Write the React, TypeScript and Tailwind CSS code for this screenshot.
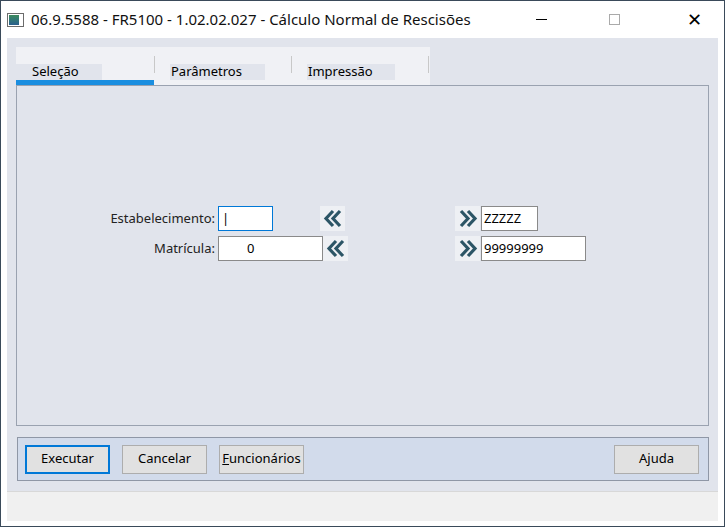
import React from "react";

const font = { fontFamily: '"Segoe UI", "Noto Sans", "Liberation Sans", sans-serif' };

function Chevrons({ dir }: { dir: "left" | "right" }) {
  const d = dir === "left" ? "M11 3 L4 10.5 L11 18 M18 3 L11 10.5 L18 18" : "M4 3 L11 10.5 L4 18 M11 3 L18 10.5 L11 18";
  return (
    <div className="flex h-[25px] w-[25px] items-center justify-center bg-[#eef0f4]">
      <svg width="22" height="21" viewBox="0 0 22 21">
        <path d={d} fill="none" stroke="#2c5566" strokeWidth="3.2" />
      </svg>
    </div>
  );
}

function Btn({ label, focus, u }: { label: string; focus?: boolean; u?: boolean }) {
  return (
    <button
      className={`h-[29px] w-[85px] bg-[#e1e1e1] text-[13px] text-black ${focus ? "border-2 border-[#0078d7]" : "border border-[#adadad]"}`}
    >
      {u ? (
        <>
          <span className="underline">F</span>uncionários
        </>
      ) : (
        label
      )}
    </button>
  );
}

export default function App() {
  return (
    <div className="h-[527px] w-[725px] overflow-hidden bg-white text-black" style={font}>
      <div className="flex h-[527px] flex-col border border-[#3a4a5a] bg-white">
        {/* title bar */}
        <div className="flex h-[37px] items-center">
          <div className="ml-[6px] flex h-[14px] w-[17px] border border-[#6b6b6b] bg-white">
            <div className="m-[1px] w-[10px] bg-gradient-to-b from-[#3c8a5c] to-[#2b5f8c]" />
          </div>
          <span className="ml-[7px] text-[15px] text-[#111]">06.9.5588 - FR5100 - 1.02.02.027 - Cálculo Normal de Rescisões</span>
          <div className="ml-auto flex h-full items-center">
            <div className="flex w-[46px] justify-center">
              <div className="h-px w-[11px] bg-black" />
            </div>
            <div className="flex w-[100px] justify-center">
              <div className="h-[11px] w-[11px] border border-[#aaa]" />
            </div>
            <div className="flex w-[60px] justify-center text-[18px] font-light">✕</div>
          </div>
        </div>
        {/* body */}
        <div className="ml-[6px] mr-[6px] flex flex-col bg-[#e1e4ec] pt-[9px]">
          {/* tabs */}
          <div className="ml-[9px] flex h-[38px] w-[414px] items-end bg-[#f0f1f5] text-[13px]">
            <div className="flex w-[138px] flex-col">
              <div className="flex h-[16px] w-[86px] items-center bg-[#e1e4ec] pl-[16px]">Seleção</div>
              <div className="h-[5px] bg-[#1a8ee0]" />
            </div>
            <div className="mb-[12px] h-[17px] w-px bg-[#c8c8c8]" />
            <div className="mb-[5px] ml-[15px] flex h-[16px] w-[95px] items-center bg-[#e1e4ec] pl-[1px]">Parâmetros</div>
            <div className="mb-[12px] ml-[26px] h-[17px] w-px bg-[#c8c8c8]" />
            <div className="mb-[5px] ml-[15px] flex h-[16px] w-[88px] items-center bg-[#e1e4ec] pl-[1px]">Impressão</div>
            <div className="mb-[12px] ml-[33px] h-[17px] w-px bg-[#c8c8c8]" />
          </div>
          {/* panel */}
          <div className="ml-[9px] mr-[9px] h-[341px] border border-[#9aa2b0] text-[13px]">
            <div className="mt-[120px] flex flex-col gap-[5px]">
              <div className="flex items-center">
                <span className="w-[198px] text-right text-[#222]">Estabelecimento:</span>
                <div className="ml-[3px] h-[25px] w-[55px] border border-[#0078d7] bg-white pl-[3px] leading-[22px]">|</div>
                <div className="ml-[47px]"><Chevrons dir="left" /></div>
                <div className="ml-[110px]"><Chevrons dir="right" /></div>
                <div className="ml-[1px] h-[25px] w-[57px] border border-[#8a8a8a] bg-white pl-[2px] leading-[22px]">ZZZZZ</div>
              </div>
              <div className="flex items-center">
                <span className="w-[198px] text-right text-[#222]">Matrícula:</span>
                <div className="ml-[3px] h-[25px] w-[105px] border border-[#8a8a8a] bg-white pl-[28px] leading-[22px]">0</div>
                <div className="ml-0"><Chevrons dir="left" /></div>
                <div className="ml-[107px]"><Chevrons dir="right" /></div>
                <div className="ml-[1px] h-[25px] w-[105px] border border-[#8a8a8a] bg-white pl-[2px] leading-[22px]">99999999</div>
              </div>
            </div>
          </div>
          {/* button bar */}
          <div className="mb-[10px] ml-[10px] mr-[9px] mt-[11px] flex h-[44px] items-center gap-[12px] border border-[#8f97a6] bg-[#d2dbeb] pl-[7px] pr-[9px]">
            <Btn label="Executar" focus />
            <Btn label="Cancelar" />
            <Btn label="Funcionários" u />
            <div className="ml-auto"><Btn label="Ajuda" /></div>
          </div>
        </div>
        <div className="ml-[6px] mr-[6px] h-[30px] border-t border-[#d8d8d8] bg-[#f0f0f0]" />
      </div>
    </div>
  );
}
